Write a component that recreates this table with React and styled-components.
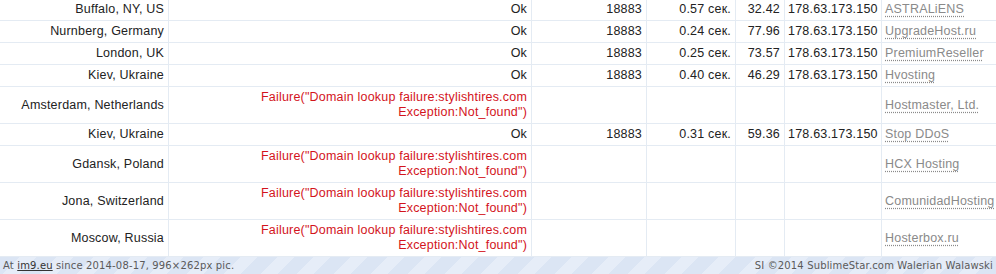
import React from "react";
import styled, { createGlobalStyle } from "styled-components";

const GlobalStyle = createGlobalStyle`
  html, body {
    margin: 0;
    padding: 0;
    background: #ffffff;
    overflow: hidden;
  }
`;

const Page = styled.div`
  width: 996px;
  height: 274px;
  display: flex;
  flex-direction: column;
  overflow: hidden;
  font-family: "Liberation Sans", Arial, sans-serif;
`;

//표 전체
const Table = styled.div`
  display: flex;
  flex-direction: column;
  margin-top: -1px;
`;

const Row = styled.div`
  display: grid;
  grid-template-columns: 169px 363px 115px 89px 49px 97px 1fr;
  border-bottom: 1px solid #e4ebf3;
`;

const Cell = styled.div`
  box-sizing: border-box;
  display: flex;
  flex-direction: column;
  justify-content: center;
  align-items: ${(p) => (p.$left ? "flex-start" : "flex-end")};
  text-align: ${(p) => (p.$left ? "left" : "right")};
  padding: 3px ${(p) => (p.$left ? "0" : "4px")} 3px ${(p) => (p.$left ? "3px" : "0")};
  border-right: ${(p) => (p.$last ? "none" : "1px solid #e4ebf3")};
  font-size: 12.5px;
  letter-spacing: 0.2px;
  line-height: 15px;
  color: #222222;
  white-space: nowrap;
  min-height: 15px;
`;

const Fail = styled.span`
  color: #d3141c;
`;

const Host = styled.span`
  color: #8a8a8a;
  text-decoration: underline dotted #8a8a8a;
  text-underline-offset: 3px;
`;

//하단 바
const Footer = styled.div`
  display: flex;
  justify-content: space-between;
  align-items: center;
  height: 19px;
  padding: 0 3px;
  background: repeating-linear-gradient(
    135deg,
    #dbe5f4 0px,
    #dbe5f4 14px,
    #e6edf8 14px,
    #e6edf8 26px
  );
  font-family: "DejaVu Sans", Verdana, sans-serif;
  font-size: 10px;
  letter-spacing: 0.15px;
  color: #5a5a5a;
`;

const FooterLink = styled.span`
  color: #333333;
  text-decoration: underline;
`;

const rows = [
  { city: "Buffalo, NY, US", ok: true, port: "18883", time: "0.57 сек.", score: "32.42", host: "ASTRALiENS" },
  { city: "Nurnberg, Germany", ok: true, port: "18883", time: "0.24 сек.", score: "77.96", host: "UpgradeHost.ru" },
  { city: "London, UK", ok: true, port: "18883", time: "0.25 сек.", score: "73.57", host: "PremiumReseller" },
  { city: "Kiev, Ukraine", ok: true, port: "18883", time: "0.40 сек.", score: "46.29", host: "Hvosting" },
  { city: "Amsterdam, Netherlands", ok: false, host: "Hostmaster, Ltd." },
  { city: "Kiev, Ukraine", ok: true, port: "18883", time: "0.31 сек.", score: "59.36", host: "Stop DDoS" },
  { city: "Gdansk, Poland", ok: false, host: "HCX Hosting" },
  { city: "Jona, Switzerland", ok: false, host: "ComunidadHosting" },
  { city: "Moscow, Russia", ok: false, host: "Hosterbox.ru" },
];

function App() {
  return (
    <Page>
      <GlobalStyle />
      <Table>
        {rows.map((r, i) => (
          <Row key={i}>
            <Cell>{r.city}</Cell>
            <Cell>
              {r.ok ? (
                "Ok"
              ) : (
                <Fail>
                  Failure("Domain lookup failure:stylishtires.com
                  <br />
                  Exception:Not_found")
                </Fail>
              )}
            </Cell>
            <Cell>{r.ok ? r.port : ""}</Cell>
            <Cell>{r.ok ? r.time : ""}</Cell>
            <Cell>{r.ok ? r.score : ""}</Cell>
            <Cell $left>{r.ok ? "178.63.173.150" : ""}</Cell>
            <Cell $left $last>
              <Host>{r.host}</Host>
            </Cell>
          </Row>
        ))}
      </Table>
      <Footer>
        <span>
          At <FooterLink>im9.eu</FooterLink> since 2014-08-17, 996×262px pic.
        </span>
        <span>SI ©2014 SublimeStar.com Walerian Walawski</span>
      </Footer>
    </Page>
  );
}

export default App;
